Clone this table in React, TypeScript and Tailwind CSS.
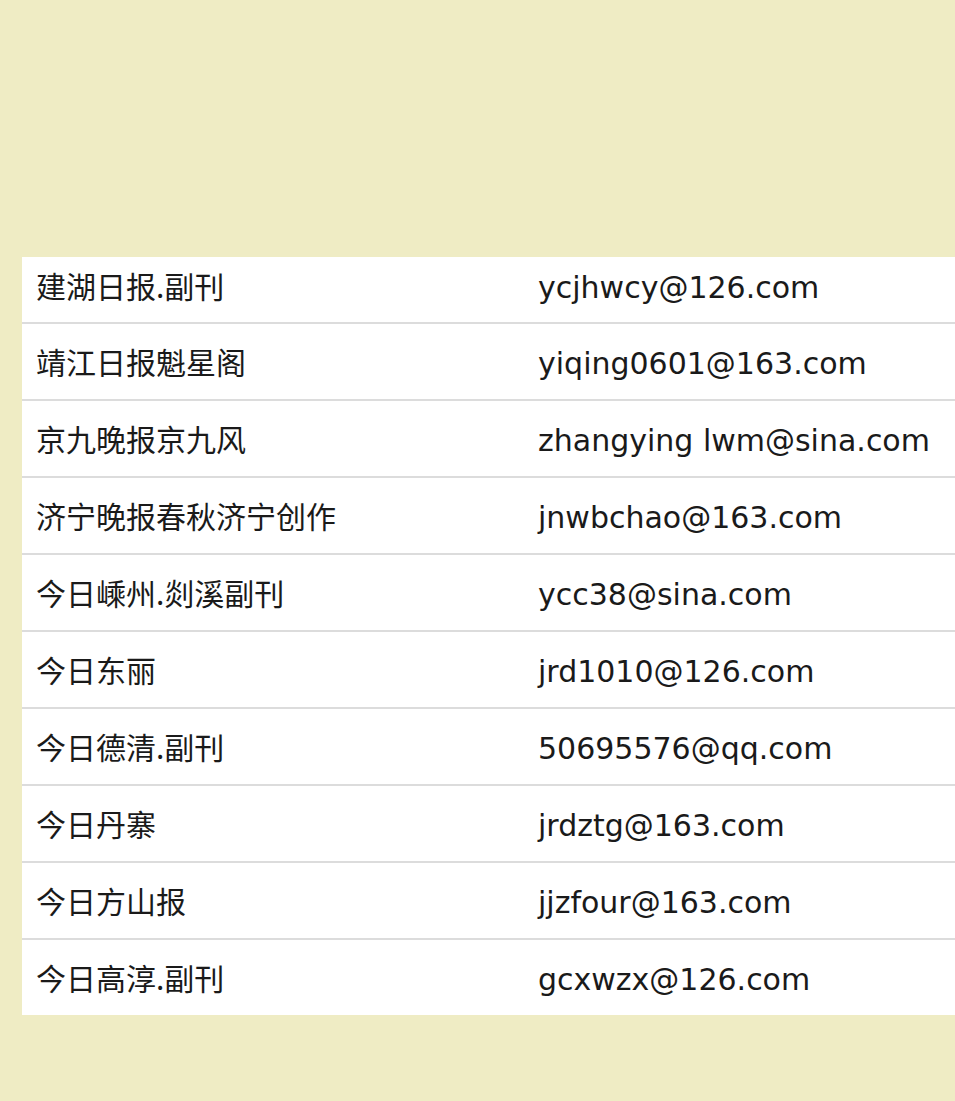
const rows: [string, string][] = [
  ["建湖日报.副刊", "ycjhwcy@126.com"],
  ["靖江日报魁星阁", "yiqing0601@163.com"],
  ["京九晚报京九风", "zhangying lwm@sina.com"],
  ["济宁晚报春秋济宁创作", "jnwbchao@163.com"],
  ["今日嵊州.剡溪副刊", "ycc38@sina.com"],
  ["今日东丽", "jrd1010@126.com"],
  ["今日德清.副刊", "50695576@qq.com"],
  ["今日丹寨", "jrdztg@163.com"],
  ["今日方山报", "jjzfour@163.com"],
  ["今日高淳.副刊", "gcxwzx@126.com"],
];

export default function App() {
  return (
    <div className="min-h-[1101px] w-[955px] bg-[#efecc4] pl-[22px] pt-[257px]">
      <div className="flex flex-col bg-white">
        {rows.map(([name, email], i) => (
          <div
            key={name}
            className={
              i === 0
                ? "flex h-[65px] items-center pb-[4px]"
                : "flex h-[77px] items-center border-t-2 border-[#dcdcdc] pt-[3px]"
            }
          >
            <div className="w-[516px] pb-[4px] pl-[14px] font-['Noto_Sans_CJK_SC',sans-serif] text-[30px] text-[#1a1a1a]">
              {name}
            </div>
            <div className="font-['DejaVu_Sans',sans-serif] text-[30px] text-[#1a1a1a]">
              {email}
            </div>
          </div>
        ))}
      </div>
    </div>
  );
}
